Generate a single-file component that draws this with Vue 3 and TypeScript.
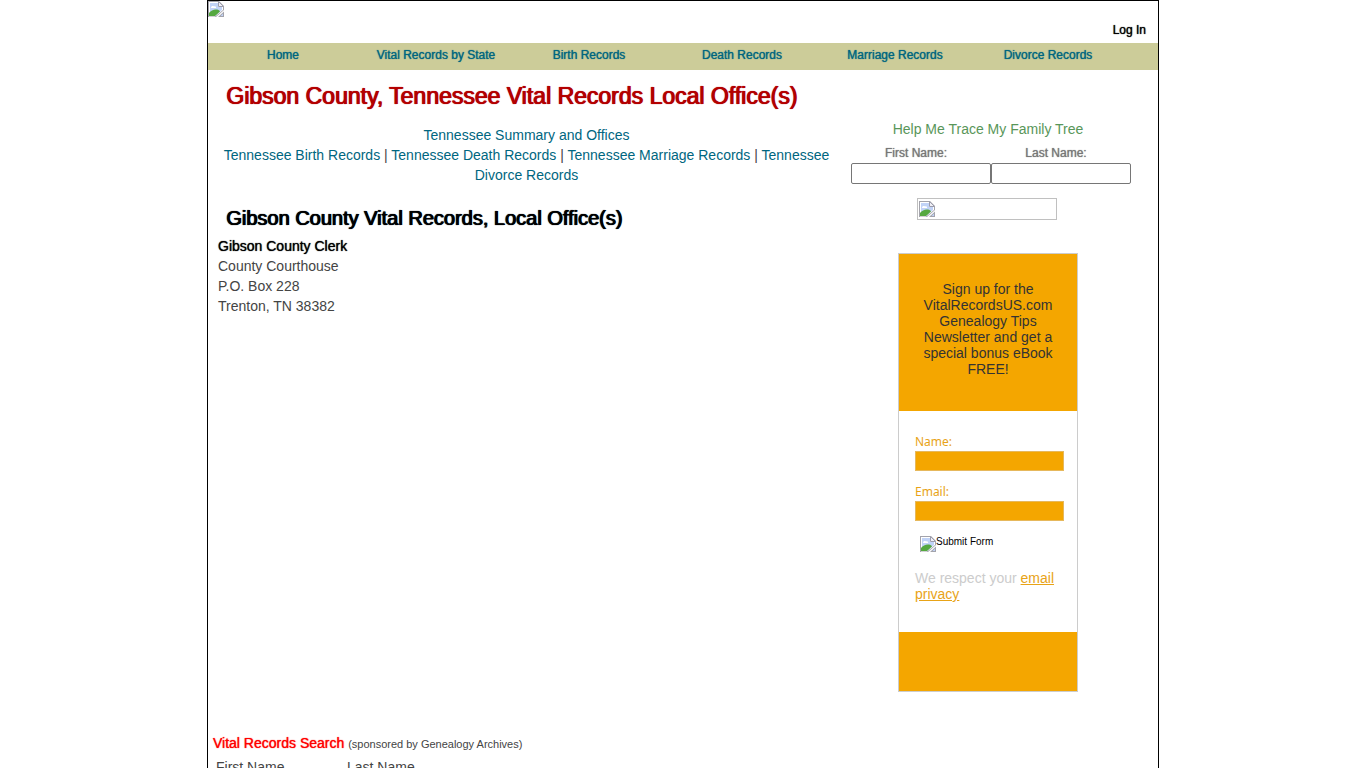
<script setup lang="ts">
import { defineComponent, h } from 'vue'

const navItems: string[] = [
  'Home',
  'Vital Records by State',
  'Birth Records',
  'Death Records',
  'Marriage Records',
  'Divorce Records',
]

const recordLinks: string[] = [
  'Tennessee Birth Records',
  'Tennessee Death Records',
  'Tennessee Marriage Records',
  'Tennessee Divorce Records',
]

const address: string[] = ['County Courthouse', 'P.O. Box 228', 'Trenton, TN 38382']

// Placeholder glyph for an image that is not available
const MissingImage = defineComponent({
  render() {
    return h('svg', { width: 16, height: 16, viewBox: '0 0 16 16', 'aria-hidden': 'true' }, [
      h('path', { d: 'M0 0H11L16 5V9L8 16H0Z', fill: '#a3a3ab' }),
      h('path', { d: 'M1 1H10.5L15 5.5V9L7 15.500H1Z', fill: '#fff' }),
      h('path', { d: 'M2 2H10V6H14V9L7 15H2Z', fill: '#c1d3f7' }),
      h('path', { d: 'M3 7C3 5 5 4.500 6 5.500C7.500 5 8.500 6 8 7Z', fill: '#fff' }),
      h('path', { d: 'M1 15V12C3 9.500 6 8 9 8.500C10.500 8.800 11.500 9.500 12 10.500L7 15Z', fill: '#55a840' }),
      h('path', { d: 'M10.500 0.500V5.500H15.500Z', fill: '#efeff6', stroke: '#9c9cab' }),
      h('path', { d: 'M16 10.500V16H10Z', fill: '#a3a3ab' }),
      h('path', { d: 'M15 12.500V15H12.500Z', fill: '#c1d3f7' }),
    ])
  },
})
</script>

<template>
  <div class="viewport">
    <div class="page">
      <header class="banner">
        <a class="logo" href="#" aria-label="Vital Records US"><MissingImage /></a>
        <a class="login strong" href="#">Log In</a>
      </header>
      <nav class="nav">
        <a v-for="item in navItems" :key="item" class="strong" href="#">{{ item }}</a>
      </nav>

      <div class="columns">
        <main class="content">
          <h1 class="strong">Gibson County, Tennessee Vital Records Local Office(s)</h1>
          <div class="links">
            <a href="#">Tennessee Summary and Offices</a><br />
            <template v-for="(link, i) in recordLinks" :key="link">
              <template v-if="i > 0"> | </template><a href="#">{{ link }}</a>
            </template>
          </div>
          <h2 class="strong">Gibson County Vital Records, Local Office(s)</h2>
          <address>
            <b class="strong">Gibson County Clerk</b>
            <span v-for="line in address" :key="line">{{ line }}</span>
          </address>
        </main>

        <aside class="side">
          <form class="trace" @submit.prevent>
            <div class="trace-title">Help Me Trace My Family Tree</div>
            <div class="trace-labels">
              <label class="strong" for="trace-first">First Name:</label>
              <label class="strong" for="trace-last">Last Name:</label>
            </div>
            <div class="trace-inputs">
              <input id="trace-first" type="text" />
              <input id="trace-last" type="text" />
            </div>
            <button class="trace-go" type="submit" aria-label="Search"><MissingImage /></button>
          </form>

          <form class="news" @submit.prevent>
            <p class="news-head">
              Sign up for the VitalRecordsUS.com Genealogy Tips Newsletter and get a special bonus eBook FREE!
            </p>
            <div class="news-body">
              <label for="news-name">Name:</label>
              <input id="news-name" type="text" />
              <label for="news-email">Email:</label>
              <input id="news-email" type="email" />
              <button type="submit"><MissingImage />Submit Form</button>
              <p>We respect your <a href="#">email privacy</a></p>
            </div>
            <div class="news-foot"></div>
          </form>
        </aside>
      </div>

      <form class="search" @submit.prevent>
        <div class="search-title">
          <b class="strong">Vital Records Search</b> <small>(sponsored by Genealogy Archives)</small>
        </div>
        <div class="search-fields">
          <label>First Name<input type="text" /></label>
          <label>Last Name<input type="text" /></label>
        </div>
      </form>
    </div>
  </div>
</template>

<style>
body {
  margin: 0;
  background: #fff;
}
</style>

<style scoped>
.viewport {
  height: 100vh;
  overflow: hidden;
  font: 14px/20px "Liberation Sans", Arial, sans-serif;
  color: #444;
}
a {
  color: #006680;
  text-decoration: none;
}
svg {
  display: block;
  flex: none;
}
input,
button {
  box-sizing: border-box;
  font: inherit;
}
.strong {
  font-weight: 400;
  text-shadow: 0 0 1px currentColor;
}
.page {
  max-width: 950px;
  margin: 0 auto;
  border: 1px solid #000;
}
.banner {
  display: flex;
  justify-content: space-between;
  align-items: flex-start;
  height: 42px;
}
.login {
  margin: 19px 12px 0 0;
  font-size: 12px;
  color: #000;
}
.nav {
  display: flex;
  gap: 3px;
  height: 27px;
  background: #cc9;
  font-size: 12px;
  line-height: 25px;
}
.nav a {
  width: 150px;
  text-align: center;
}
.columns {
  display: flex;
  justify-content: space-between;
}
.content {
  flex: 1;
  padding: 12px 3px 0 10px;
}
h1,
h2 {
  margin: 0 8px;
}
h1.strong,
h2.strong {
  text-shadow: 0 0 1px currentColor, 1px 0 0 currentColor;
}
h1 {
  font-size: 23px;
  line-height: 28px;
  color: #b30000;
}
h2 {
  margin-top: 19px;
  font-size: 20px;
  line-height: 28px;
  color: #000;
}
.links {
  margin-top: 15px;
  text-align: center;
}
address {
  margin-top: 4px;
  font-style: normal;
}
address b,
address span {
  display: block;
}
address b {
  color: #000;
}
.side {
  width: 300px;
  margin-right: 20px;
  padding-top: 49px;
}
.trace-title {
  text-align: center;
  color: #599659;
}
.trace-labels {
  display: flex;
  padding: 4px 0 0 8px;
  font-size: 12px;
  color: #777;
}
.trace-labels label {
  width: 140px;
  text-align: center;
}
.trace-inputs {
  display: flex;
  padding-left: 13px;
}
.trace-inputs input {
  width: 140px;
  height: 21px;
  border: 1px solid #767676;
  border-radius: 2px;
}
.trace-go {
  display: block;
  width: 140px;
  height: 22px;
  margin: 14px 0 0 79px;
  padding: 1px;
  border: 1px solid #c0c0c0;
  background: #fff;
}
.news {
  width: 178px;
  margin: 33px auto 0;
  border: 1px solid #ccc;
  line-height: 16px;
}
.news-head {
  margin: 0;
  padding: 27px 20px 34px;
  background: #f4a600;
  color: #333;
  text-align: center;
}
.news-body {
  padding: 21px 13px 30px 16px;
}
.news-body label {
  display: block;
  font: 12px/19px "Noto Sans", sans-serif;
  color: #e8a317;
}
.news-body input {
  display: block;
  width: 100%;
  height: 20px;
  margin-bottom: 11px;
  border: 1px solid #e6b85c;
  background: #f4a600;
}
.news-body button {
  display: flex;
  margin: 15px 0 0 5px;
  padding: 0;
  border: 0;
  background: none;
  font-size: 10px;
  line-height: 12px;
  color: #000;
}
.news-body p {
  margin: 18px 0 0;
  color: #ccc;
}
.news-body p a {
  color: #e8a317;
  text-decoration: underline;
}
.news-foot {
  height: 59px;
  background: #f4a600;
}
.search {
  padding: 41px 5px 20px;
}
.search-title b {
  color: #f00;
}
.search-title small {
  font-size: 11px;
}
.search-fields {
  display: flex;
  padding: 3px 3px 0;
}
.search-fields label {
  width: 131px;
}
.search-fields input {
  display: block;
  width: 120px;
}
</style>
